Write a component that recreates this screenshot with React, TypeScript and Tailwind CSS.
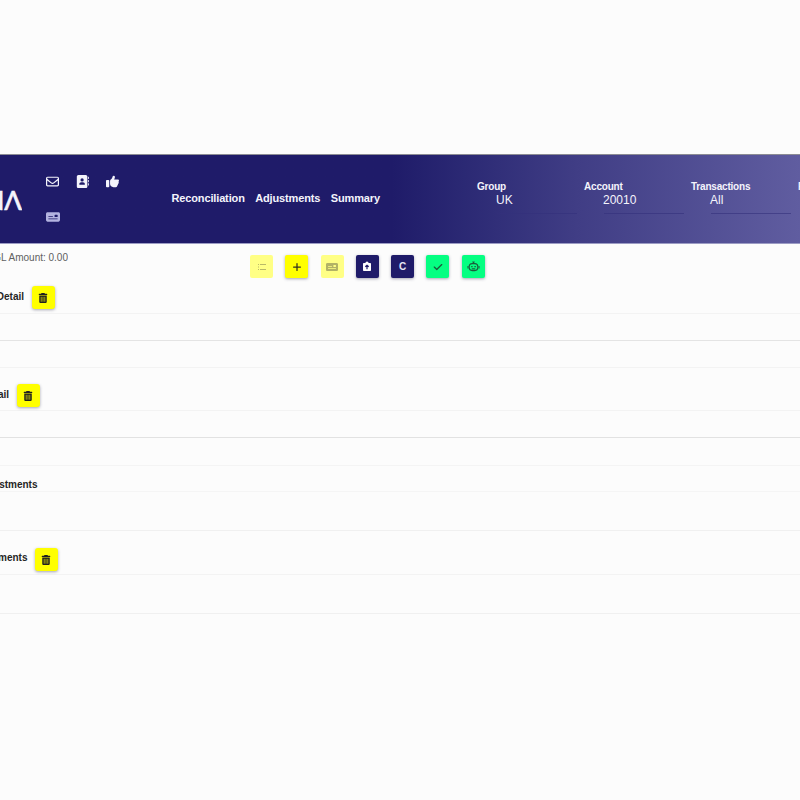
import { FaRegEnvelope, FaAddressBook, FaThumbsUp, FaMoneyCheck, FaPlus, FaCheck, FaTrashCan } from 'react-icons/fa6'

const filters = [
  { label: 'Group', value: 'UK' },
  { label: 'Account', value: '20010' },
  { label: 'Transactions', value: 'All' },
]

function ListIcon() {
  return (
    <svg width="10" height="8" viewBox="0 0 10 8" fill="none" stroke="currentColor">
      <path d="M1 1.5h1M3 1.5h6M1 6.5h1M3 6.5h6" strokeWidth="1" />
      <path d="M1 4h1" strokeWidth="1" />
    </svg>
  )
}

function ClipboardIcon() {
  return (
    <svg width="10" height="11" viewBox="0 0 10 11">
      <path d="M1.8 2h1.6a1.6 1.6 0 0 1 3.2 0h1.6q.8 0 .8.8v6.4q0 .8-.8.8H1.8q-.8 0-.8-.8V2.8q0-.8.8-.8z" fill="#fff" />
      <path d="M5 8.3V4.3M3.3 5.8 5 4.2l1.7 1.6" fill="none" stroke="#1f1b69" strokeWidth="1.2" />
    </svg>
  )
}

function RobotIcon() {
  return (
    <svg width="13" height="11" viewBox="0 0 13 11" fill="none" stroke="currentColor" strokeWidth="1.1">
      <path d="M6.5 2.5V1M5.3 1h2.4" />
      <rect x="2.2" y="2.6" width="8.6" height="7" rx="3" />
      <path d="M1 5v2.6M12 5v2.6M4.8 7.9h3.4" />
      <path d="M4.2 5.6h1.4M7.4 5.6h1.4" strokeWidth="1.4" />
    </svg>
  )
}

function DeleteButton() {
  return (
    <button className="flex h-[23px] w-[23px] shrink-0 items-center justify-center rounded-[3px] bg-[#ffff00] pr-[2px] text-[#202020] shadow-[0_1px_3px_rgba(60,60,90,0.45)]">
      <FaTrashCan size={10} />
    </button>
  )
}

function Header() {
  return (
    <header className="flex h-[90px] overflow-hidden border-y border-t-[#8c8c94] border-b-[#9c9cc4] bg-linear-to-r from-[#1f1b69] from-49% via-[#403d85] via-72% to-[#605da0] text-[#f4f4fc]">
      <div className="flex w-[22px] shrink-0 justify-end overflow-hidden pt-[30px] font-[Lato] text-[26px] leading-[30px] font-medium whitespace-nowrap [-webkit-text-stroke:0.5px_#f4f4fc]">
        <span>N</span>
        <span>Λ</span>
      </div>
      <div className="ml-6 w-[125.5px] shrink-0 pt-[20px]">
        <div className="flex h-[13px] items-center">
          <FaRegEnvelope size={13} className="mr-[17px]" />
          <FaAddressBook size={13} className="mr-[17px]" />
          <FaThumbsUp size={13} />
        </div>
        <FaMoneyCheck size={14} className="mt-[22px] text-[#b3b3e0]" />
      </div>
      <nav className="flex h-full w-[305.5px] shrink-0 gap-[10.5px] pt-[35px] text-[11px] leading-4 font-bold tracking-[-0.14px]">
        <a>Reconciliation</a>
        <a>Adjustments</a>
        <a>Summary</a>
      </nav>
      <div className="flex shrink-0 pt-[25px]">
        {filters.map((f) => (
          <div key={f.label} className="w-[107px]">
            <div className="text-[10px] leading-[13px] font-bold tracking-[-0.2px]">{f.label}</div>
            <div className="pl-[19px] text-[12px] leading-[14px]">{f.value}</div>
            <div className="mt-[6px] ml-5 h-px w-20 bg-[#34317c]/60" />
          </div>
        ))}
        <div className="text-[10px] leading-[13px] font-bold">P</div>
      </div>
    </header>
  )
}

function Toolbar() {
  return (
    <div className="flex h-[42px]">
      <div className="flex w-[68px] shrink-0 justify-end overflow-hidden pt-[7px] text-[10px] leading-[14px] whitespace-nowrap text-[#606060]">
        <span>GL Amount: 0.00</span>
      </div>
      <div className="ml-[182px] flex gap-[12.3px] pt-[11px] *:flex *:h-[23px] *:w-[23px] *:items-center *:justify-center *:rounded-[2px]">
        <button className="bg-[#ffff85] text-[#b9b968]">
          <ListIcon />
        </button>
        <button className="bg-[#ffff00] text-[#303020] shadow-[0_1px_3px_rgba(60,60,90,0.45)]">
          <FaPlus size={10} />
        </button>
        <button className="bg-[#ffff85] text-[#b3b366]">
          <FaMoneyCheck size={12} />
        </button>
        <button className="bg-[#1f1b69] shadow-[0_1px_3px_rgba(60,60,90,0.45)]">
          <ClipboardIcon />
        </button>
        <button className="bg-[#1f1b69] text-[10px] font-bold text-[#e4e4f4] shadow-[0_1px_3px_rgba(60,60,90,0.45)]">C</button>
        <button className="bg-[#05ff82] text-[#1c5c3c] shadow-[0_1px_3px_rgba(60,60,90,0.45)]">
          <FaCheck size={10} />
        </button>
        <button className="bg-[#05ff82] text-[#1c5c3c] shadow-[0_1px_3px_rgba(60,60,90,0.45)]">
          <RobotIcon />
        </button>
      </div>
    </div>
  )
}

export default function App() {
  return (
    <div className="h-[800px] w-[800px] overflow-hidden bg-[#fcfcfc] pt-[154px] font-['Liberation_Sans',Arial,sans-serif] text-[#252525]">
      <Header />
      <Toolbar />

      <section className="h-[97px] text-[10px] leading-[14px] font-bold">
        <div className="flex h-[28px] border-b border-[#f3f3f3]">
          <div className="mt-[4px] flex w-6 justify-end overflow-hidden">
            <span>Detail</span>
          </div>
          <div className="ml-2">
            <DeleteButton />
          </div>
        </div>
        <div className="h-[27px] border-b border-[#e4e4e4]" />
        <div className="h-[27px] border-b border-[#f3f3f3]" />
      </section>

      <section className="h-[83px] text-[10px] leading-[14px] font-bold">
        <div className="flex h-[28px] border-b border-[#f3f3f3]">
          <div className="mt-[5px] flex w-[9px] justify-end overflow-hidden">
            <span>ail</span>
          </div>
          <div className="mt-px ml-2">
            <DeleteButton />
          </div>
        </div>
        <div className="h-[27px] border-b border-[#e2e2e2]" />
        <div className="h-[28px] border-b border-[#f4f4f4]" />
      </section>

      <section className="h-[82px] text-[10px] leading-[14px] font-bold">
        <div className="h-[26px] border-b border-[#f5f5f5] pt-[12px]">
          <div className="flex w-[37.5px] justify-end overflow-hidden">
            <span>stments</span>
          </div>
        </div>
        <div className="h-[39px] border-b border-[#f0f0f0]" />
      </section>

      <section className="text-[10px] leading-[14px] font-bold">
        <div className="flex h-[27px] border-b border-[#f3f3f3]">
          <div className="mt-[3px] flex w-[27.5px] justify-end overflow-hidden">
            <span>ments</span>
          </div>
          <div className="ml-[7.5px]">
            <DeleteButton />
          </div>
        </div>
        <div className="h-[39px] border-b border-[#f0f0f0]" />
      </section>
    </div>
  )
}
